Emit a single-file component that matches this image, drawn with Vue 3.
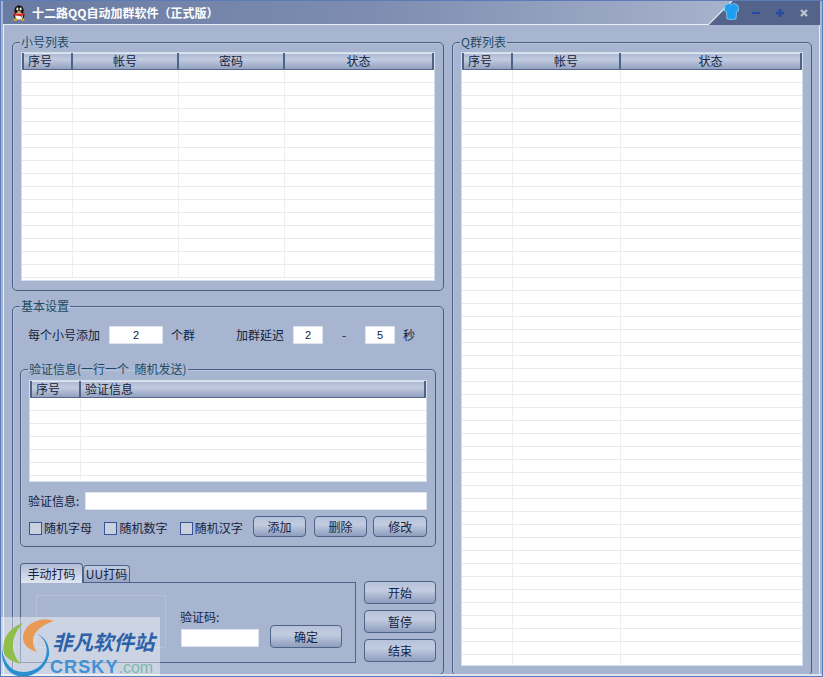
<script setup>
const leftRows = 16
const rightRows = 46
const msgRows = 7
</script>

<template>
  <div class="window">
    <header class="titlebar">
      <svg class="qq" width="16" height="16" viewBox="0 0 16 16">
        <ellipse cx="8" cy="5.500" rx="4.600" ry="5.300" fill="#111" />
        <ellipse cx="8" cy="10.500" rx="5.400" ry="4.400" fill="#1a1a1a" />
        <ellipse cx="8" cy="11" rx="3.800" ry="3.800" fill="#f4f4f4" />
        <ellipse cx="6.400" cy="4" rx="1" ry="1.400" fill="#fff" />
        <ellipse cx="9.600" cy="4" rx="1" ry="1.400" fill="#fff" />
        <path d="M5.600 5.800h4.800L8 7.400z" fill="#f2b21c" />
        <path d="M2.600 7.400q5.400 2.400 10.800 0l.2 2.200q-1.500 .8-2.800 1l.4 2-2-1.600q-2 .2-6.400-1z" fill="#d8261c" />
        <path d="M3 14q2-1.200 4 .6l-2 1.200h-2.400zM13 14q-2-1.200-4 .6l2 1.200h2.400z" fill="#efa51c" />
      </svg>
      <span class="title">十二路QQ自动加群软件（正式版）</span>
      <div class="caption">
        <svg class="caption-bg" width="112" height="25" viewBox="0 0 112 25">
          <path d="M0 25 24 1H112V25Z" fill="#54638a" />
          <path d="M0 25 24 1" stroke="#e8edf5" stroke-width="1.200" fill="none" />
        </svg>
        <svg class="shirt" width="15" height="18" viewBox="0 0 15 18">
          <path d="M4.500 1.500 1 3.500.5 9l2 .6L3 17q4.500 1 9 0l.5-7.400 2-.6L14 3.500 10.500 1.500Q7.500 3.500 4.500 1.500Z" fill="#1f9df0" stroke="#7fd0fa" stroke-width=".8" />
        </svg>
        <svg class="ctl" width="10" height="10" viewBox="0 0 10 10"><path d="M1 5h8" stroke="#2848a8" stroke-width="2" /></svg>
        <svg class="ctl" width="10" height="10" viewBox="0 0 10 10"><path d="M1 5h8M5 1v8" stroke="#2848a8" stroke-width="2.400" /></svg>
        <svg class="ctl" width="10" height="10" viewBox="0 0 10 10"><path d="M2 2l6 6M8 2l-6 6" stroke="#bfc5d2" stroke-width="2.200" /></svg>
      </div>
    </header>

    <main class="body">
      <section class="col-left">
        <fieldset class="group accounts">
          <legend>小号列表</legend>
          <div class="list list-accounts">
            <div class="head">
              <span class="first">序号</span><span>帐号</span><span>密码</span><span class="last">状态</span>
            </div>
            <div class="rows">
              <div class="row" v-for="n in leftRows" :key="n"><i></i><i></i><i></i><i></i></div>
            </div>
          </div>
        </fieldset>

        <fieldset class="group settings">
          <legend>基本设置</legend>
          <div class="opts">
            <span>每个小号添加</span>
            <input class="num w54" value="2" />
            <span class="m8">个群</span>
            <span class="delay">加群延迟</span>
            <input class="num w30" value="2" />
            <span class="dash">-</span>
            <input class="num w30" value="5" />
            <span class="m8">秒</span>
          </div>

          <fieldset class="group verify">
            <legend>验证信息(一行一个&nbsp;&nbsp;随机发送)</legend>
            <div class="list list-msg">
              <div class="head">
                <span class="first">序号</span><span class="first last">验证信息</span>
              </div>
              <div class="rows">
                <div class="row" v-for="n in msgRows" :key="n"><i></i><i></i></div>
              </div>
            </div>
            <div class="msg-line">
              <span class="msg-label">验证信息:</span>
              <input class="text" />
            </div>
            <div class="check-line">
              <label class="check"><b></b>随机字母</label>
              <label class="check"><b></b>随机数字</label>
              <label class="check"><b></b>随机汉字</label>
              <button class="btn add">添加</button>
              <button class="btn del">删除</button>
              <button class="btn edit">修改</button>
            </div>
          </fieldset>

          <div class="bottom">
            <div class="tabs-wrap">
              <div class="tabs">
                <span class="tab active">手动打码</span>
                <span class="tab">UU打码</span>
              </div>
              <div class="panel">
                <div class="captcha"></div>
                <div class="code">
                  <span>验证码:</span>
                  <div class="code-row">
                    <input class="text code-input" />
                    <button class="btn ok">确定</button>
                  </div>
                </div>
              </div>
            </div>
            <div class="actions">
              <button class="btn action">开始</button>
              <button class="btn action">暂停</button>
              <button class="btn action">结束</button>
            </div>
          </div>
        </fieldset>
      </section>

      <fieldset class="group groups">
        <legend>Q群列表</legend>
        <div class="list list-groups">
          <div class="head">
            <span class="first">序号</span><span>帐号</span><span class="last">状态</span>
          </div>
          <div class="rows">
            <div class="row" v-for="n in rightRows" :key="n"><i></i><i></i><i></i></div>
          </div>
        </div>
      </fieldset>
    </main>

    <!-- 水印 -->
    <div class="watermark">
      <svg class="wm-logo" width="60" height="60" viewBox="0 0 60 60">
        <path d="M23 6C8 11 1 24 4 37 8 43 14 45 21 47 12 38 8 22 23 6Z" fill="#8fbf4a" />
        <path d="M54 4C38 -1 23 8 23 22 24 29 30 33 37 35 30 26 30 12 54 4Z" fill="#e89a55" />
        <path d="M37 17C46 22 49 32 45 42 40 53 26 58 14 53 7 49 3 40 2 32 1 44 6 56 18 59 32 62 46 52 49 38 50 28 45 20 37 17Z" fill="#2a8fd0" />
      </svg>
      <div class="wm-text">
        <div class="wm-cn">非凡软件站</div>
        <div class="wm-en">CRSKY<span>.com</span></div>
      </div>
    </div>
  </div>
</template>

<style>
html, body { margin: 0; padding: 0; background: #a7b5d1; }
</style>

<style scoped>
.window {
  position: relative;
  box-sizing: border-box;
  width: 823px;
  height: 677px;
  overflow: hidden;
  background: #a7b5d1;
  font: 12px/16px "Noto Sans CJK SC", "Liberation Sans", sans-serif;
  color: #14233f;
  border: 1px solid #5c7cb8;
  box-shadow: inset 2px 0 0 #a7b5d1, inset 3px 0 0 #e6ebf4, inset -2px 0 0 #a7b5d1, inset -3px 0 0 #e6ebf4;
}
.window::after {
  content: "";
  position: absolute;
  left: 0;
  right: 0;
  bottom: 0;
  height: 2px;
  background: #dde4f0;
}

.titlebar {
  box-sizing: border-box;
  height: 24px;
  display: flex;
  align-items: center;
  padding-left: 8px;
  margin: 0 2px;
  border-bottom: 1px solid #e8edf5;
  background: linear-gradient(90deg, #6a7ba3 0%, #7d8cb0 45%, #a6b2cc 88%, #b6c0d6 100%);
}

.qq { flex: none; }

.title {
  margin-left: 5px;
  color: #fff;
  font-weight: 700;
  font-size: 12px;
}

.caption {
  position: relative;
  margin-left: auto;
  width: 112px;
  height: 24px;
  display: flex;
  align-items: center;
  padding-left: 16px;
  box-sizing: border-box;
}
.caption-bg { position: absolute; left: 0; top: -1px; }
.shirt { position: relative; margin-top: -3px; }
.ctl { position: relative; margin-left: 14px; }
.shirt + .ctl { margin-left: 12px; }

.body {
  display: flex;
  gap: 8px;
  padding: 9px 0 0 11px;
}

.col-left {
  width: 432px;
  display: flex;
  flex-direction: column;
  gap: 7px;
}

.group {
  box-sizing: border-box;
  margin: 0;
  min-width: 0;
  padding: 2px 8px 9px;
  border: 1px solid #4a5d87;
  border-radius: 5px;
  box-shadow: inset 1px 1px 0 #b8c4db;
}
.group legend {
  padding: 0 1px;
  margin-left: -1px;
  height: 16px;
  color: #1d4b63;
}

.accounts { height: 257px; }
.settings { height: 377px; padding: 0 7px; }
.settings > legend { margin-left: 0; }
.groups { width: 360px; height: 642px; }
.verify { height: 186px; margin-top: 17px; padding-top: 3px; padding-bottom: 0; }

.list {
  box-sizing: border-box;
  background: #fff;
  border: 1px solid #d5deec;
  overflow: hidden;
  display: flex;
  flex-direction: column;
}
.list-accounts { width: 414px; height: 229px; }
.list-groups { width: 342px; height: 614px; }
.list-msg { width: 398px; height: 102px; }

.head {
  display: grid;
  height: 16px;
  line-height: 16px;
  flex: none;
  background: linear-gradient(180deg, #a9b5d0 0%, #c2cbdf 40%, #93a2c2 100%);
  border-bottom: 1px solid #56678e;
  box-shadow: inset 0 1px 0 #dfe5f0;
  color: #14233f;
}
.head span {
  text-align: center;
  border-right: 2px solid #4f6389;
  box-sizing: border-box;
}
.head .first { text-align: left; padding-left: 4px; border-left: 2px solid #4f6389; }
.head .first + .first { border-left: 0; padding-left: 4px; }
.head .last { border-right: 2px solid #4f6389; }

.rows { flex: 1; overflow: hidden; }
.row {
  display: grid;
  height: 13px;
  box-sizing: border-box;
  border-bottom: 1px solid #e9e9ec;
}
.row i { display: block; border-right: 1px solid #eeeef0; }
.row i:last-child { border-right: 0; }

.list-accounts .head, .list-accounts .row { grid-template-columns: 51px 106px 106px 1fr; }
.list-groups .head, .list-groups .row { grid-template-columns: 51px 108px 1fr; }
.list-msg .head, .list-msg .row { grid-template-columns: 51px 1fr; }

.opts {
  display: flex;
  align-items: center;
  height: 18px;
  margin-top: 12px;
  padding-left: 8px;
}
input {
  box-sizing: border-box;
  height: 18px;
  border: 1px solid #dde4f0;
  background: #fff;
  outline: none;
  padding: 0;
  font: 11px "Liberation Sans", sans-serif;
  color: #14233f;
}
.num { text-align: center; }
.w54 { width: 54px; margin-left: 9px; }
.w30 { width: 30px; }
.m8 { margin-left: 8px; }
.delay { margin-left: 41px; margin-right: 9px; }
.dash { width: 42px; text-align: center; }

.msg-line {
  display: flex;
  align-items: center;
  margin-top: 10px;
}
.msg-label { flex: none; width: 57px; margin-left: -1px; white-space: nowrap; }
.text { width: 342px; }

.check-line {
  display: flex;
  align-items: center;
  height: 21px;
  margin-top: 6px;
}
.check {
  width: 76px;
  margin-top: 3px;
  display: flex;
  align-items: center;
  gap: 2px;
}
.check b {
  box-sizing: border-box;
  width: 13px;
  height: 13px;
  border: 1px solid #3a5396;
  background: #c9d0de;
}

.btn {
  box-sizing: border-box;
  padding: 0;
  height: 21px;
  border: 1px solid #4f6389;
  border-radius: 4px;
  background: linear-gradient(180deg, #b6c2da 0%, #c2cce0 40%, #8e9dbe 100%);
  font: 12px "Noto Sans CJK SC", sans-serif;
  color: #14233f;
}
.add { width: 53px; margin-left: -2px; }
.del { width: 54px; margin-left: 8px; }
.edit { width: 54px; margin-left: 6px; }

.bottom {
  display: flex;
  margin-top: 16px;
}
.tabs-wrap { width: 336px; }
.tabs { display: flex; align-items: flex-end; height: 19px; }
.tab {
  box-sizing: border-box;
  height: 17px;
  line-height: 15px;
  width: 47px;
  text-align: center;
  border: 1px solid #4f6389;
  border-bottom: 0;
  border-radius: 4px 4px 0 0;
  background: linear-gradient(180deg, #c2cce0, #98a7c8);
}
.tab.active {
  width: 63px;
  height: 20px;
  line-height: 19px;
  background: linear-gradient(180deg, #b2bed8 0%, #dfe5f0 100%);
  position: relative;
  z-index: 1;
  margin-bottom: -1px;
}
.panel {
  box-sizing: border-box;
  height: 81px;
  border: 1px solid #4f6389;
  display: flex;
  padding: 12px 0 0 15px;
}
.captcha {
  width: 130px;
  height: 53px;
  box-sizing: border-box;
  border: 1px solid #b3c0d8;
}
.code {
  margin-left: 14px;
  padding-top: 14px;
}
.code-row {
  display: flex;
  align-items: flex-end;
  margin-left: 1px;
}
.code-input { width: 78px; margin-bottom: 1px; }
.ok { width: 72px; height: 23px; margin-left: 11px; }

.actions {
  margin-left: 8px;
  padding-top: 18px;
  display: flex;
  flex-direction: column;
  gap: 6px;
}
.action { width: 72px; height: 23px; }

.watermark {
  position: absolute;
  left: -1px;
  bottom: -1px;
  width: 160px;
  height: 60px;
  background: rgba(255, 255, 255, .42);
  display: flex;
  z-index: 2;
}
.wm-logo { flex: none; }
.wm-text { margin-left: -8px; }
.wm-cn {
  margin-top: 11px;
  font: italic 700 20.500px/26px "Noto Sans CJK SC", sans-serif;
  color: #2c62a8;
  white-space: nowrap;
}
.wm-en {
  margin-top: 4px;
  margin-left: -2px;
  font: 700 18px/18px "Liberation Sans", sans-serif;
  letter-spacing: 1.100px;
  color: #3f92d4;
  white-space: nowrap;
}
.wm-en span { color: #7fb8ac; font-weight: 400; font-size: 16px; letter-spacing: 0; }
</style>
